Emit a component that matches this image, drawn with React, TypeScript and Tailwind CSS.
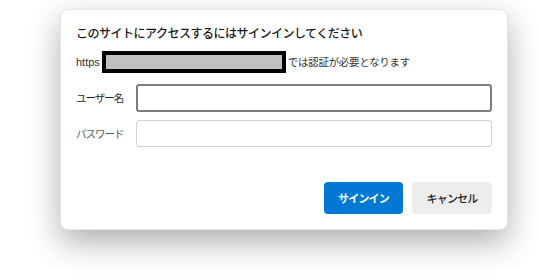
const jp = "font-['Segoe_UI','Noto_Sans_CJK_JP','Noto_Sans',sans-serif]";

export default function App() {
  return (
    <div className={`h-[279px] w-[540px] overflow-hidden bg-white ${jp}`}>
      <div className="ml-[60px] mt-[9px] flex h-[221px] w-[448px] flex-col rounded-lg border border-black/10 bg-white px-[15px] pb-[15px] pt-[15px] shadow-[0_12px_32px_rgba(0,0,0,0.32)]">
        <h1 className="text-[12px] leading-4 font-medium tracking-[-0.5px] text-[#1a1a1a]">
          このサイトにアクセスするにはサインインしてください
        </h1>

        <div className="mt-[10px] flex h-[22px] items-center text-[10.5px] tracking-[-0.3px] text-[#333]">
          <span className="font-['Liberation_Sans',sans-serif] text-[11px] tracking-normal">https</span>
          <span className="mx-[2px] h-[22px] w-[184px] border-4 border-black bg-[#c0c0c0]" />
          <span>では認証が必要となります</span>
        </div>

        <div className="mt-[11px] flex items-center">
          <label className="w-[60px] text-[10.5px] tracking-[-1px] text-[#1f1f1f]">ユーザー名</label>
          <input className="h-[28px] flex-1 rounded-[3px] border-2 border-[#7a7d82] bg-white outline-none" />
        </div>

        <div className="mt-[8px] flex items-center">
          <label className="w-[60px] text-[10.5px] tracking-[-1px] text-[#55595e]">パスワード</label>
          <input
            type="password"
            className="h-[27px] flex-1 rounded-[3px] border border-[#d0d0d0] bg-white outline-none"
          />
        </div>

        <div className="mt-auto flex justify-end gap-[9px]">
          <button className="h-[32px] w-[79px] rounded-[4px] bg-[#0078d4] text-[11px] font-bold tracking-[-0.8px] text-white">
            サインイン
          </button>
          <button className="h-[32px] w-[80px] rounded-[4px] bg-[#ededed] text-[11px] font-medium tracking-[-0.8px] text-[#1a1a1a]">
            キャンセル
          </button>
        </div>
      </div>
    </div>
  );
}
